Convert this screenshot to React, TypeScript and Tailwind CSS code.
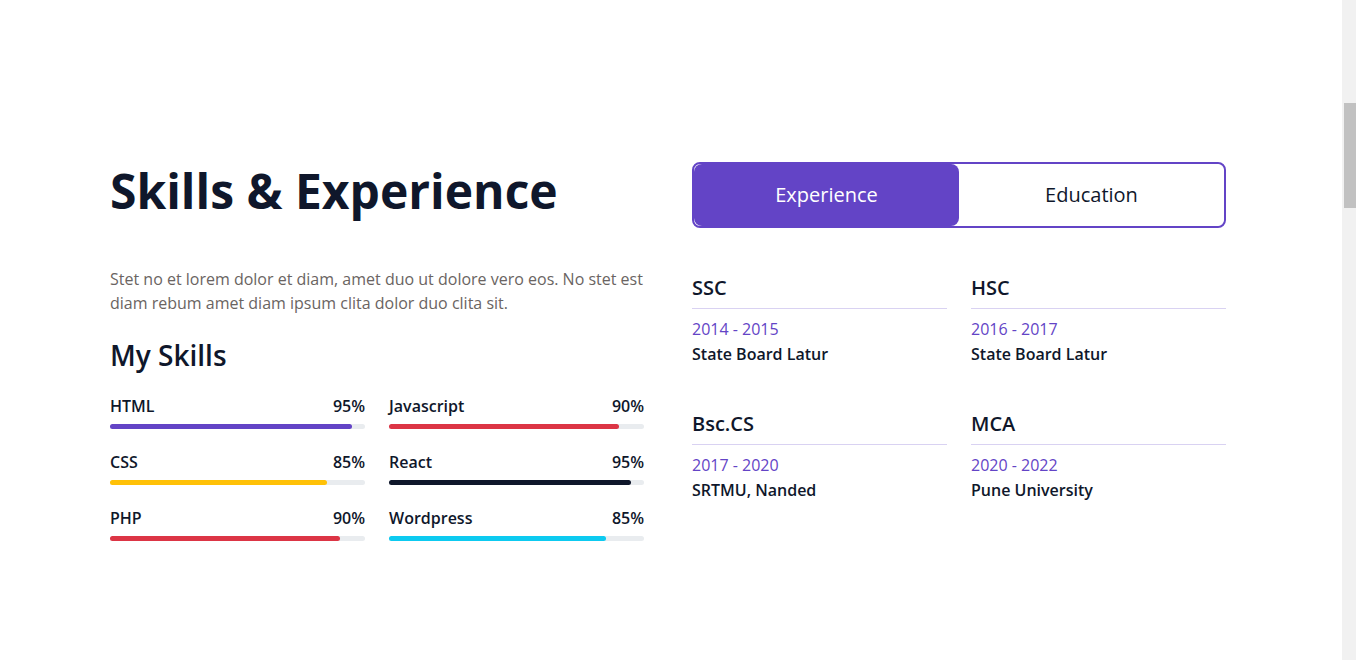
import React from "react";

const skillsLeft = [
  { name: "HTML", pct: 95, color: "bg-[#6344c6]" },
  { name: "CSS", pct: 85, color: "bg-[#ffc107]" },
  { name: "PHP", pct: 90, color: "bg-[#dc3545]" },
];
const skillsRight = [
  { name: "Javascript", pct: 90, color: "bg-[#dc3545]" },
  { name: "React", pct: 95, color: "bg-[#0f172b]" },
  { name: "Wordpress", pct: 85, color: "bg-[#0dcaf0]" },
];

const edu = [
  { title: "SSC", years: "2014 - 2015", place: "State Board Latur" },
  { title: "HSC", years: "2016 - 2017", place: "State Board Latur" },
  { title: "Bsc.CS", years: "2017 - 2020", place: "SRTMU, Nanded" },
  { title: "MCA", years: "2020 - 2022", place: "Pune University" },
];

function SkillCol({ items }: { items: typeof skillsLeft }) {
  return (
    <div className="flex flex-col gap-[21px]">
      {items.map((s) => (
        <div key={s.name} className="flex flex-col">
          <div className="flex justify-between text-[16px] leading-6 font-semibold text-[#0f172b]">
            <span>{s.name}</span>
            <span>{s.pct}%</span>
          </div>
          <div className="mt-[6px] h-[5px] rounded-full bg-[#e9ecef]">
            <div className={`h-[5px] rounded-full ${s.color}`} style={{ width: `${s.pct}%` }} />
          </div>
        </div>
      ))}
    </div>
  );
}

export default function App() {
  return (
    <div className="flex h-[660px] w-full bg-white overflow-hidden" style={{ fontFamily: '"Open Sans", "Noto Sans", sans-serif' }}>
      <main className="flex-1 pl-[110px] pt-[162px]">
        <div className="flex w-[1116px] gap-[48px]">
          {/* Left */}
          <div className="w-[534px] flex flex-col">
            <h1 className="text-[48px] leading-[1.2] font-bold text-[#0f172b]">Skills &amp; Experience</h1>
            <p className="mt-[47px] text-[16px] leading-6 text-[#6a6462]">
              Stet no et lorem dolor et diam, amet duo ut dolore vero eos. No stet est diam rebum amet diam ipsum clita dolor duo clita sit.
            </p>
            <h3 className="mt-[24px] text-[28px] leading-[1.2] font-semibold text-[#0f172b]">My Skills</h3>
            <div className="mt-[22px] grid grid-cols-2 gap-x-[24px]">
              <SkillCol items={skillsLeft} />
              <SkillCol items={skillsRight} />
            </div>
          </div>
          {/* Right */}
          <div className="w-[534px] flex flex-col">
            <div className="flex h-[66px] rounded-lg border-2 border-[#6344c6]">
              <button className="flex-1 rounded-lg bg-[#6344c6] text-white text-[20px]">Experience</button>
              <button className="flex-1 rounded-lg bg-white text-[#0f172b] text-[20px]">Education</button>
            </div>
            <div className="mt-[48px] grid grid-cols-2 gap-x-[24px] gap-y-[46px]">
              {edu.map((e) => (
                <div key={e.title} className="flex flex-col">
                  <h5 className="text-[20px] leading-6 font-semibold text-[#0f172b]">{e.title}</h5>
                  <div className="mt-[8px] h-px bg-[#d9d2f2]" />
                  <div className="mt-[8px] text-[16px] leading-6 text-[#6344c6]">{e.years}</div>
                  <div className="mt-px text-[16px] leading-6 font-semibold text-[#0f172b]">{e.place}</div>
                </div>
              ))}
            </div>
          </div>
        </div>
      </main>
      <aside className="w-[14px] h-full bg-[#f1f1f1] pl-[2px] pt-[103px]">
        <div className="h-[105px] w-[12px] bg-[#c1c1c1]" />
      </aside>
    </div>
  );
}
